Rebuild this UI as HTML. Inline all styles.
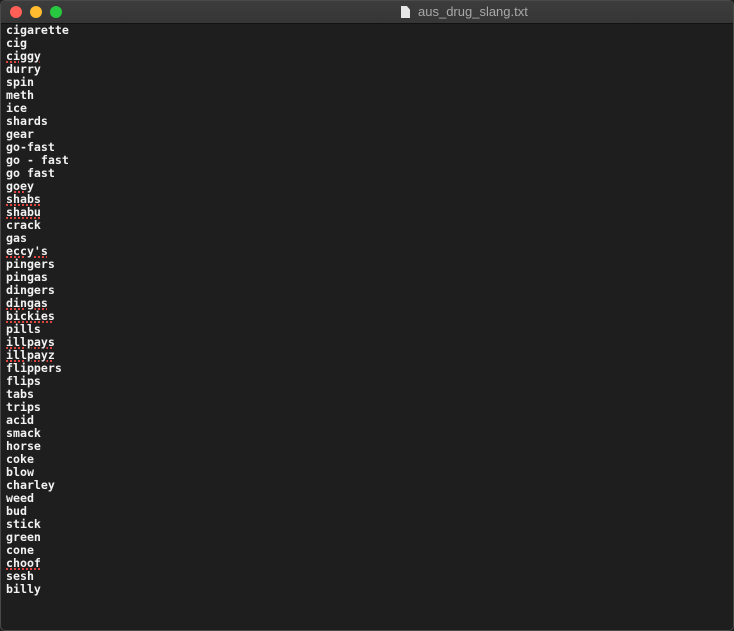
<!DOCTYPE html><html><head><style>
body{margin:0;width:734px;height:631px;background:#1e1e1e;overflow:hidden;font-family:"DejaVu Sans Mono","Liberation Mono",monospace}
.win{position:absolute;left:0;top:0;width:732px;height:629px;border:1px solid #4a4a4a;border-radius:5px;overflow:hidden;background:#1e1e1e}
.bar{height:22px;background:linear-gradient(#3c3c3c,#363636);border-bottom:1px solid #111;position:relative}
.d{position:absolute;top:5px;width:12px;height:12px;border-radius:50%}
.t{position:absolute;left:400px;top:3px;color:#a8a8a8;font:13px "Liberation Sans",sans-serif}
.t i{display:inline-block;width:9px;height:12px;background:#e6e6e6;vertical-align:-2px;margin-right:8px;clip-path:polygon(0 0,65% 0,100% 30%,100% 100%,0 100%)}
pre{margin:0;position:absolute;left:5px;top:23px;color:#f2f2f2;font-size:11.6px;line-height:13px;font-weight:bold;font-family:inherit}
u{text-decoration:underline dotted #e0443e;text-decoration-thickness:2px;text-underline-offset:1px}
</style></head><body><div class="win"><div class="bar">
<div class="d" style="left:9px;background:#fe5f57"></div><div class="d" style="left:29px;background:#febc2e"></div><div class="d" style="left:49px;background:#28c840"></div>
<div class="t"><i></i>aus_drug_slang.txt</div></div>
<pre>cigarette
cig
<u>ciggy</u>
durry
spin
meth
ice
shards
gear
go-fast
go - fast
go fast
<u>goey</u>
<u>shabs</u>
<u>shabu</u>
crack
gas
<u>eccy's</u>
pingers
pingas
dingers
<u>dingas</u>
<u>bickies</u>
pills
<u>illpays</u>
<u>illpayz</u>
flippers
flips
tabs
trips
acid
smack
horse
coke
blow
charley
weed
bud
stick
green
cone
<u>choof</u>
sesh
billy</pre></div></body></html>
